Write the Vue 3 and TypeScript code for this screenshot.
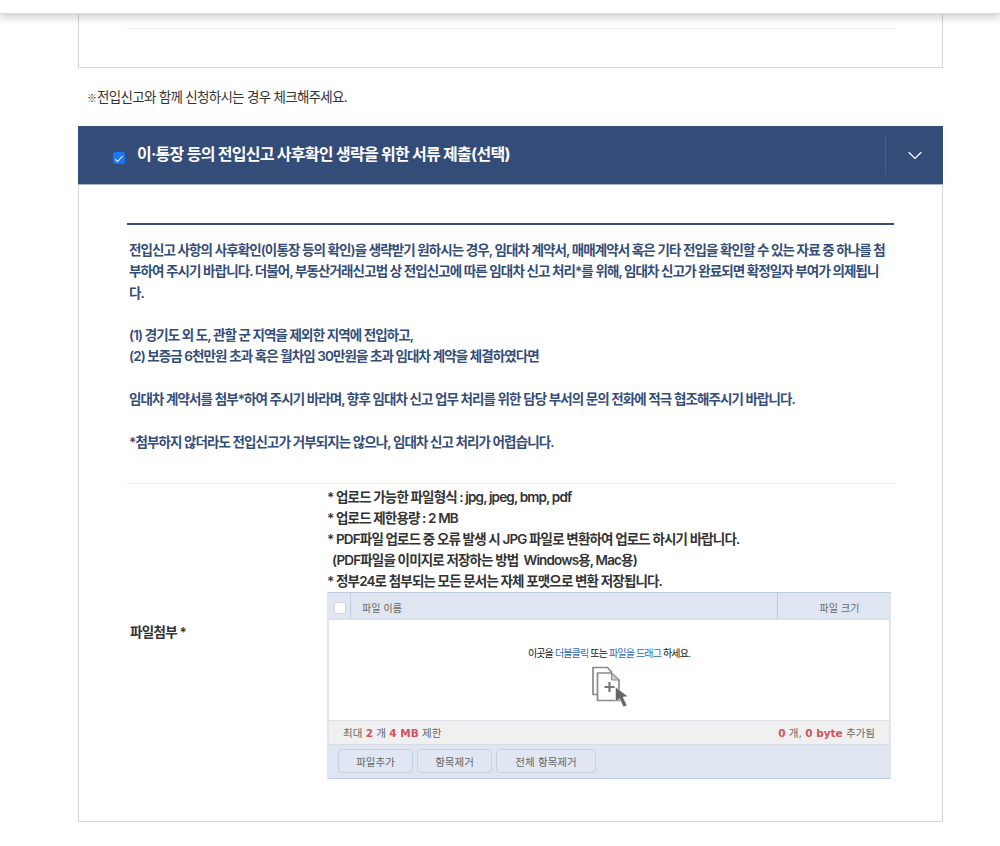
<script setup lang="ts">
const notes: string[] = [
  '* 업로드 가능한 파일형식 : jpg, jpeg, bmp, pdf',
  '* 업로드 제한용량 : 2 MB',
  '* PDF파일 업로드 중 오류 발생 시 JPG 파일로 변환하여 업로드 하시기 바랍니다.',
  '\u00a0\u00a0(PDF파일을 이미지로 저장하는 방법 \u00a0Windows용, Mac용)',
  '* 정부24로 첨부되는 모든 문서는 자체 포맷으로 변환 저장됩니다.',
]
const buttons: string[] = ['파일추가', '항목제거', '전체 항목제거']
</script>

<template>
  <div class="page">
    <header class="topbar"></header>
    <main class="wrap">
      <section class="card-prev">
        <div class="prev-line"></div>
      </section>
      <p class="notice"><span class="mark">※</span>전입신고와 함께 신청하시는 경우 체크해주세요.</p>
      <div class="bar">
        <label class="bar-title">
          <input type="checkbox" class="bar-check" checked />
          <span>이·통장 등의 전입신고 사후확인 생략을 위한 서류 제출(선택)</span>
        </label>
        <div class="bar-toggle">
          <svg width="14" height="9" viewBox="0 0 14 9" fill="none">
            <path d="M0.7 1.2 L7 7.4 L13.3 1.2" stroke="#fff" stroke-width="1.3" />
          </svg>
        </div>
      </div>
      <section class="panel">
        <div class="guide">
          <p>전입신고 사항의 사후확인(이통장 등의 확인)을 생략받기 원하시는 경우, 임대차 계약서, 매매계약서 혹은 기타 전입을 확인할 수 있는 자료 중 하나를 첨부하여 주시기 바랍니다. 더불어, 부동산거래신고법 상 전입신고에 따른 임대차 신고 처리*를 위해, 임대차 신고가 완료되면 확정일자 부여가 의제됩니다.</p>
          <br />
          <p>(1) 경기도 외 도, 관할 군 지역을 제외한 지역에 전입하고,</p>
          <p>(2) 보증금 6천만원 초과 혹은 월차임 30만원을 초과 임대차 계약을 체결하였다면</p>
          <br />
          <p>임대차 계약서를 첨부*하여 주시기 바라며, 향후 임대차 신고 업무 처리를 위한 담당 부서의 문의 전화에 적극 협조해주시기 바랍니다.</p>
          <br />
          <p>*첨부하지 않더라도 전입신고가 거부되지는 않으나, 임대차 신고 처리가 어렵습니다.</p>
        </div>
        <div class="attach">
          <div class="attach-label">파일첨부 *</div>
          <div class="attach-body">
            <ul class="notes">
              <li v-for="n in notes" :key="n">{{ n }}</li>
            </ul>
            <div class="uploader">
              <div class="up-head">
                <div class="up-check"><span class="fake-check"></span></div>
                <div class="up-name">파일 이름</div>
                <div class="up-size">파일 크기</div>
              </div>
              <div class="up-drop">
                <p class="drop-text">이곳을 <b>더블클릭</b> 또는 <b>파일을 드래그</b> 하세요.</p>
                <svg class="drop-icon" width="38" height="42" viewBox="0 0 38 42" fill="none">
                  <path d="M7 28.5 H2 V1.5 H16.5 L21 6.5" stroke="#8a8a8a" stroke-width="1.7" fill="#fff" />
                  <path d="M6.5 34.5 V7 H20.5 L28 14 V34.5 Z" stroke="#8a8a8a" stroke-width="1.7" fill="#fff" />
                  <path d="M20.5 7 V14 H28 Z" stroke="#8a8a8a" stroke-width="1" fill="#ccc" />
                  <path d="M18.5 16 V26 M13.5 21 H23.5" stroke="#777" stroke-width="2.2" />
                  <path d="M24.5 21 L24.5 36 L28.5 32.5 L32.5 41 L36 39.5 L32 31 L37 30.5 Z" fill="#666" stroke="#fff" stroke-width="0.5" />
                </svg>
              </div>
              <div class="up-status">
                <span>최대 <em>2</em> 개 <em>4 MB</em> 제한</span>
                <span><em>0</em> 개, <em>0 byte</em> 추가됨</span>
              </div>
              <div class="up-actions">
                <button v-for="b in buttons" :key="b" type="button" class="up-btn">{{ b }}</button>
              </div>
            </div>
          </div>
        </div>
      </section>
    </main>
  </div>
</template>

<style>
html, body { margin: 0; background: #fff; }
</style>

<style scoped>
.page {
  font-family: Inter, "Noto Sans CJK KR", sans-serif;
  width: 1000px;
  height: 846px;
  overflow: hidden;
  position: relative;
  background: #fff;
}
.topbar {
  height: 13px;
  background: #fff;
  box-shadow: 0 1px 1px #dcdcdc, 0 5px 9px rgba(0, 0, 0, 0.18);
  position: relative;
  z-index: 2;
}
.wrap {
  width: 865px;
  margin-left: 78px;
}
.card-prev {
  box-sizing: border-box;
  height: 55px;
  border: 1px solid #d6d6d6;
  border-top: 0;
  padding: 15px 48px 0;
}
.prev-line { border-top: 1px solid #eee; }
.notice {
  margin: 0;
  padding: 20px 0 0 9px;
  height: 38px;
  font-size: 13.5px;
  line-height: 18px;
  color: #333;
  letter-spacing: -0.7px;
  font-weight: 400;
}
.mark {
  display: inline-block;
  width: 10px;
  font-family: "Noto Sans CJK KR", sans-serif;
  font-size: 10px;
  letter-spacing: 0;
  color: #333;
}
.bar {
  box-sizing: border-box;
  height: 59px;
  background: #344c78;
  border-bottom: 1px solid #a9b4c6;
  display: flex;
  align-items: center;
  justify-content: space-between;
}
.bar-title {
  display: flex;
  align-items: center;
  color: #fff;
  font-size: 16px;
  font-weight: 700;
  letter-spacing: -0.72px;
  padding-left: 35px;
  margin-top: -5px;
}
.bar-check {
  appearance: none;
  position: relative;
  margin: 11px 12px 0 0;
  width: 12px;
  height: 12px;
  border-radius: 2px;
  background: #1a76f2;
}
.bar-check::after {
  content: "";
  position: absolute;
  left: 4px;
  top: 1.5px;
  width: 3px;
  height: 6.5px;
  border: solid #fff;
  border-width: 0 1.6px 1.6px 0;
  transform: rotate(42deg);
}
.bar-toggle {
  width: 58px;
  height: 39px;
  border-left: 1px solid #445c88;
  display: flex;
  align-items: center;
  justify-content: center;
  box-sizing: border-box;
}
.panel {
  box-sizing: border-box;
  height: 637px;
  border: 1px solid #d6d6d6;
  border-top: 0;
  padding: 38px 48px 0;
}
.guide {
  border-top: 2px solid #344c78;
  padding: 15px 2px 30px;
  font-size: 13.5px;
  line-height: 21.3px;
  font-weight: 600;
  letter-spacing: -0.9px;
  color: #344c78;
  word-break: break-all;
}
.guide p { margin: 0; }
.guide br { display: block; content: ""; height: 21.3px; }
.attach {
  border-top: 1px solid #eee;
  display: flex;
  align-items: center;
}
.attach-label {
  width: 200px;
  padding-left: 3px;
  font-size: 13.5px;
  font-weight: 600;
  letter-spacing: -0.7px;
  color: #333;
  box-sizing: border-box;
}
.attach-body { width: 564px; }
.notes {
  list-style: none;
  margin: 0;
  padding: 3px 0 0;
  font-size: 13.5px;
  line-height: 21px;
  font-weight: 600;
  letter-spacing: -0.85px;
  color: #333;
}
.uploader {
  width: 564px;
  box-sizing: border-box;
  border: 1px solid #bfcbde;
  border-left: 2px solid #dfe6f0;
  border-right: 2px solid #dfe6f0;
  font-family: "DejaVu Sans", "Noto Sans CJK KR", sans-serif;
  font-size: 10px;
  color: #666;
}
.up-head {
  display: flex;
  box-sizing: border-box;
  height: 27px;
  background: #dfe6f1;
  align-items: center;
  border-bottom: 1px solid #d8dfeb;
}
.up-check {
  width: 22px;
  height: 100%;
  border-right: 1px solid #c6d0e0;
  display: flex;
  align-items: center;
  justify-content: center;
  box-sizing: border-box;
  padding-top: 5px;
}
.fake-check {
  width: 10px;
  height: 10px;
  border-radius: 3px;
  background: #fff;
  border: 1px solid #d5d5d5;
}
.up-name { flex: 1; padding: 3px 0 0 11px; }
.up-size {
  width: 112px;
  height: 100%;
  border-left: 1px solid #bfcbde;
  display: flex;
  align-items: center;
  justify-content: center;
  box-sizing: border-box;
  padding: 3px 0 0 12px;
}
.up-drop {
  height: 100px;
  background: #fff;
  display: flex;
  flex-direction: column;
  align-items: center;
}
.drop-text {
  margin: 26px 0 0;
  font-family: Inter, "Noto Sans CJK KR", sans-serif;
  font-size: 10px;
  letter-spacing: -0.85px;
  line-height: 14px;
  color: #111;
}
.drop-text b { font-weight: 400; color: #2a68b0; }
.drop-icon { margin: 6px 0 0 2px; }
.up-status {
  box-sizing: border-box;
  height: 25px;
  background: #f0f0f0;
  border-top: 1px solid #dcdfe4;
  border-bottom: 1px solid #d8dde6;
  display: flex;
  align-items: center;
  justify-content: space-between;
  padding: 0 14px;
  font-size: 10.5px;
}
.up-status em { font-style: normal; font-weight: 700; color: #cf5560; }
.up-actions {
  height: 33px;
  background: #dfe6f1;
  display: flex;
  align-items: center;
  gap: 4px;
  padding-left: 9px;
}
.up-btn {
  height: 24px;
  padding: 0;
  width: 75px;
  border: 1px solid #c6d2e2;
  border-radius: 4px;
  background: #e0e7f2;
  font: inherit;
  font-size: 10.5px;
  color: #666;
}
.up-btn:last-child { width: 100px; }
</style>
